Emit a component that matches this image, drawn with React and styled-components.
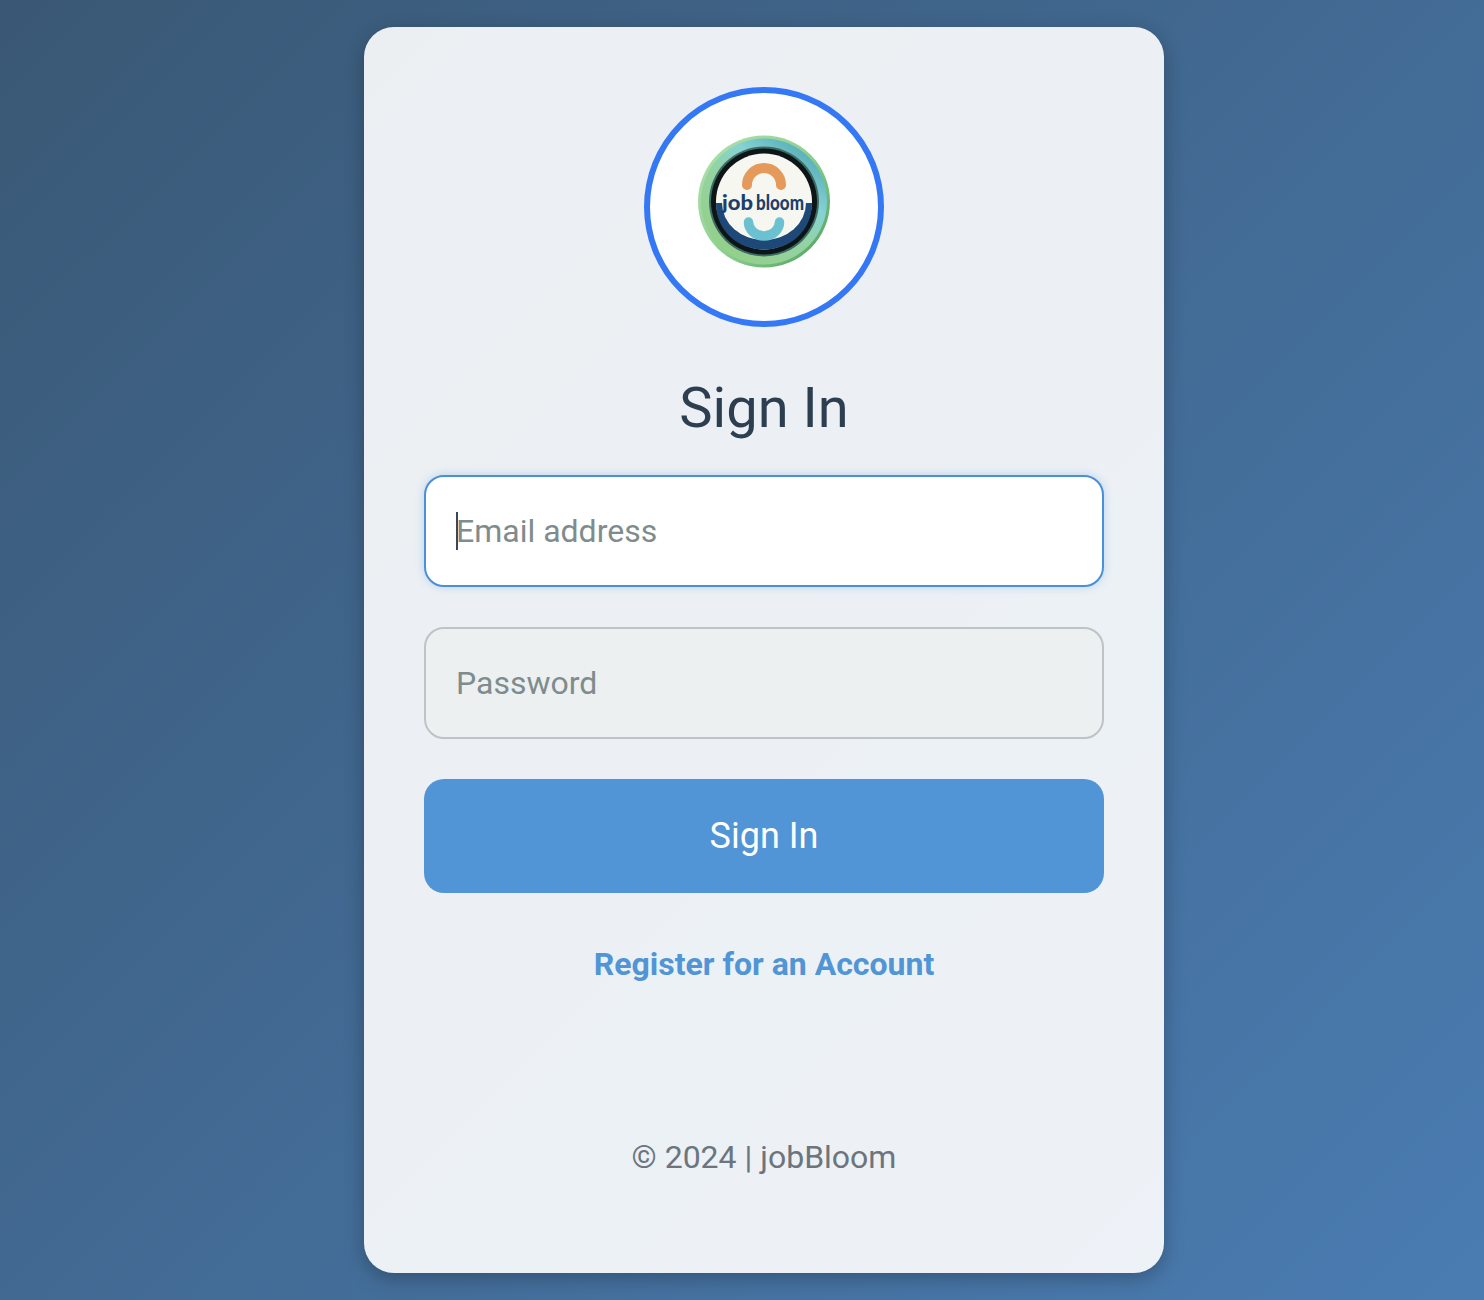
import styled, { createGlobalStyle } from 'styled-components';

const GlobalStyle = createGlobalStyle`
  html, body {
    margin: 0;
    padding: 0;
  }
  body {
    font-family: Roboto, 'Liberation Sans', sans-serif;
  }
`;

const Page = styled.div`
  width: 100%;
  height: 1300px;
  overflow: hidden;
  display: flex;
  justify-content: center;
  padding: 27px 0 0 44px;
  box-sizing: border-box;
  background: linear-gradient(135deg, #3a5875 0%, #4a7cb2 100%);
`;

const Card = styled.main`
  width: 800px;
  height: 1246px;
  box-sizing: border-box;
  padding: 60px;
  display: flex;
  flex-direction: column;
  align-items: center;
  border-radius: 30px;
  background: rgba(255, 255, 255, 0.9);
  box-shadow: 0 6px 20px rgba(0, 0, 0, 0.25);
`;

const LogoCircle = styled.div`
  width: 240px;
  height: 240px;
  box-sizing: border-box;
  border: 6px solid #3578f6;
  border-radius: 50%;
  background: #fff;
  display: flex;
  align-items: center;
  justify-content: center;
`;

const Title = styled.h1`
  margin: 45px 0 31px;
  font-size: 56px;
  line-height: 72px;
  font-weight: 400;
  color: #2c3e50;
`;

const Form = styled.form`
  width: 100%;
  display: flex;
  flex-direction: column;
  gap: 40px;
`;

const Field = styled.div`
  position: relative;
`;

const Input = styled.input`
  display: block;
  width: 100%;
  height: 112px;
  box-sizing: border-box;
  padding: 0 30px;
  border-radius: 20px;
  border: 2px solid ${({ $active }) => ($active ? '#4a90d9' : '#bdc3c7')};
  background: ${({ $active }) => ($active ? '#fff' : '#ecf0f1')};
  box-shadow: ${({ $active }) => ($active ? '0 0 10px rgba(74, 144, 217, 0.3)' : 'none')};
  font-family: inherit;
  font-size: 32px;
  color: #2c3e50;
  outline: none;
  &::placeholder {
    color: #7f8c8d;
    opacity: 1;
  }
`;

const Caret = styled.span`
  position: absolute;
  left: 32px;
  top: 37px;
  width: 2px;
  height: 38px;
  background: #3c4654;
`;

const SubmitButton = styled.button`
  width: 100%;
  height: 114px;
  border: none;
  border-radius: 20px;
  background: #5195d6;
  color: #fff;
  font-family: inherit;
  font-size: 36px;
  font-weight: 400;
`;

const RegisterLink = styled.a`
  margin-top: 49px;
  font-size: 32px;
  line-height: 44px;
  font-weight: 700;
  color: #5195d6;
  text-decoration: none;
`;

const Footer = styled.footer`
  margin-top: 149px;
  font-size: 32px;
  line-height: 44px;
  color: #6c757d;
`;

const LogoWord = styled.text`
  font-family: Lato, sans-serif;
  font-weight: 900;
  font-size: 20px;
  fill: #1d3f6b;
`;

const Logo = () => (
  <svg width="160" height="164" viewBox="0 0 160 164" aria-label="jobBloom logo">
    <defs>
      <linearGradient id="ring" x1="0.85" y1="0.1" x2="0.2" y2="0.9">
        <stop offset="0" stopColor="#58aeb9" />
        <stop offset="0.3" stopColor="#86d2d4" />
        <stop offset="0.55" stopColor="#93d3a4" />
        <stop offset="1" stopColor="#93d08b" />
      </linearGradient>
      <linearGradient id="rim" x1="0.1" y1="0.2" x2="0.9" y2="0.9">
        <stop offset="0" stopColor="#a8dea6" />
        <stop offset="0.5" stopColor="#8ccf90" />
        <stop offset="1" stopColor="#5aa866" />
      </linearGradient>
      <clipPath id="lower">
        <rect x="0" y="78" width="160" height="86" />
      </clipPath>
    </defs>
    <circle cx="80" cy="76.500" r="66" fill="url(#rim)" />
    <circle cx="80" cy="76.500" r="63" fill="url(#ring)" />
    <circle cx="80" cy="76.500" r="55" fill="#3d6a62" />
    <circle cx="80" cy="76.500" r="53" fill="#0d1517" />
    <circle cx="80" cy="76.500" r="48" fill="#f7f7f1" />
    <path d="M32 78 H128 C128 106 106 124.500 80 124.500 C54 124.500 32 106 32 78Z" fill="#1d4877" />
    <ellipse cx="80" cy="78" rx="42" ry="37" fill="#f7f7f1" clipPath="url(#lower)" />
    <path
      d="M63 60 A17 17 0 0 1 97 60"
      fill="none"
      stroke="#e59a5c"
      strokeWidth="10"
      strokeLinecap="round"
    />
    <path
      d="M64.500 97 A15.500 14 0 0 0 95.500 97"
      fill="none"
      stroke="#6cc1d0"
      strokeWidth="9.500"
      strokeLinecap="round"
    />
    <LogoWord x="38" y="85" textLength="31" lengthAdjust="spacingAndGlyphs">
      job
    </LogoWord>
    <LogoWord x="72" y="85" textLength="48" lengthAdjust="spacingAndGlyphs">
      bloom
    </LogoWord>
  </svg>
);

const App = () => (
  <>
    <GlobalStyle />
    <Page>
      <Card>
        <LogoCircle>
          <Logo />
        </LogoCircle>
        <Title>Sign In</Title>
        <Form onSubmit={(e) => e.preventDefault()}>
          <Field>
            <Input $active type="email" placeholder="Email address" />
            <Caret />
          </Field>
          <Field>
            <Input type="password" placeholder="Password" />
          </Field>
          <SubmitButton type="submit">Sign In</SubmitButton>
        </Form>
        <RegisterLink href="#">Register for an Account</RegisterLink>
        <Footer>© 2024 | jobBloom</Footer>
      </Card>
    </Page>
  </>
);

export default App;
